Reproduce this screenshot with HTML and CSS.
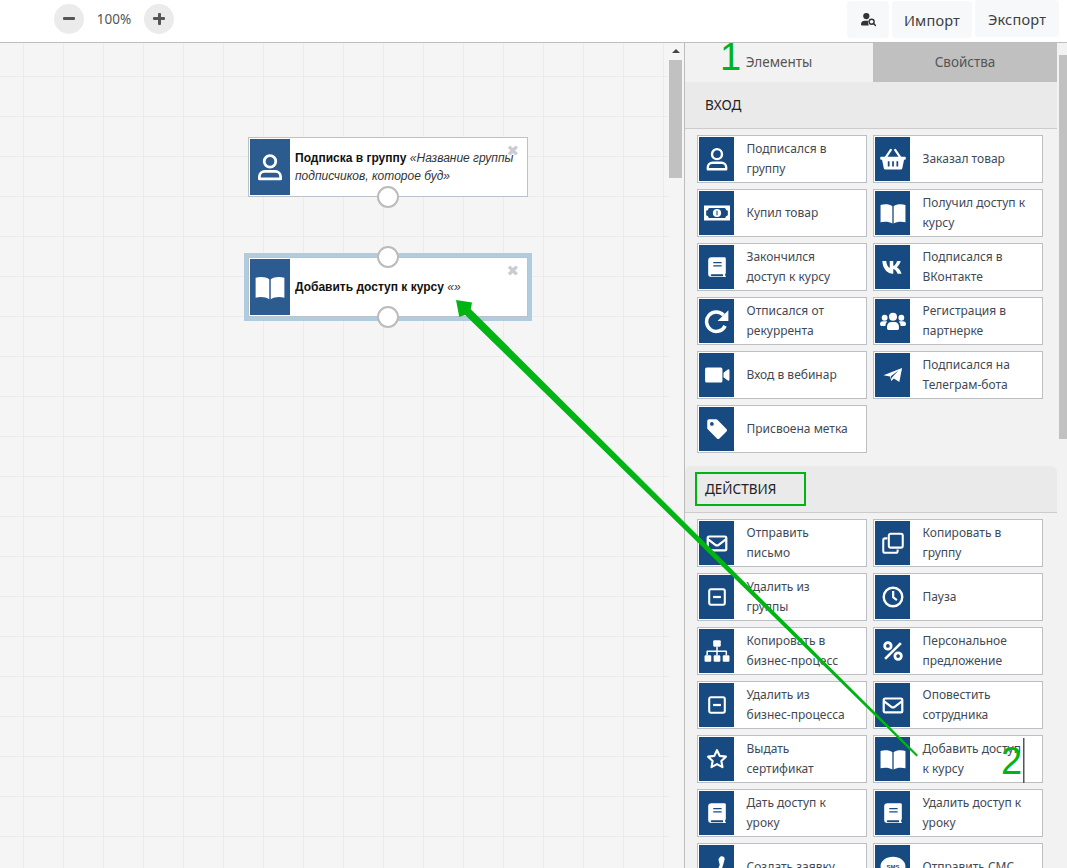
FILE: index.html
```html
<!DOCTYPE html>
<html lang="ru">
<head>
<meta charset="utf-8">
<title>Редактор процесса</title>
<link rel="stylesheet" href="styles.css">
</head>
<body>
<svg class="defs" width="0" height="0" aria-hidden="true">
  <symbol id="i-user" viewBox="0 0 24 24"><circle cx="12" cy="7.500" r="4.600" fill="none" stroke="#fff" stroke-width="2.200"/><path d="M3.500 21.500v-1.700a4.300 4.300 0 0 1 4.300-4.300h8.400a4.300 4.300 0 0 1 4.300 4.300v1.700z" fill="none" stroke="#fff" stroke-width="2.200" stroke-linejoin="round"/></symbol>
  <symbol id="i-basket" viewBox="0 0 24 24"><path fill="#fff" fill-rule="evenodd" d="M1 10h22a.8.8 0 0 1 .8.8v1a.8.8 0 0 1-.8.8h-.8l-1.600 8a1.500 1.500 0 0 1-1.500 1.200H5a1.500 1.500 0 0 1-1.500-1.200l-1.600-8H1a.8.8 0 0 1-.8-.8v-1A.8.8 0 0 1 1 10zM7.200 14v5h1.600v-5zM11.200 14v5h1.600v-5zM15.200 14v5h1.600v-5z"/><path d="M5 11l5-7.500M19 11l-5-7.500" stroke="#fff" stroke-width="2" stroke-linecap="round"/></symbol>
  <symbol id="i-money" viewBox="0 0 24 24"><path fill="#fff" fill-rule="evenodd" d="M0 5h24v14H0zM4.500 7.300Q4 9.500 2 10v4q2 .5 2.500 2.700h15Q20 14.500 22 14v-4q-2-.5-2.500-2.700z"/><circle cx="12" cy="12" r="3.800" fill="#fff"/><path d="M11.500 10h1v4h-1z" fill="#164a80"/></symbol>
  <symbol id="i-bookopen" viewBox="0 0 24 24"><path fill="#fff" d="M.5 4.500C4.500 3.500 8.800 3.800 11.400 5.700v16C8.800 20 4.500 19.600.5 20.500zM23.500 4.500C19.500 3.500 15.200 3.800 12.600 5.700v16c2.600-1.700 6.900-2.100 10.900-1.200z"/></symbol>
  <symbol id="i-book" viewBox="-2 -2 28 28"><path fill="#fff" fill-rule="evenodd" d="M6 1.500h14a1.500 1.500 0 0 1 1.500 1.500v15.500a1.200 1.200 0 0 1-.7 1v2a1 1 0 0 1 .7 1v.3H6a3.500 3.500 0 0 1-3.500-3.500V5A3.500 3.500 0 0 1 6 1.500zM8 6.500v1.500h9V6.500zM8 10v1.500h9V10zM6 19.800a1.200 1.200 0 0 0 0 2.200h12.500v-2.200z"/></symbol>
  <symbol id="i-vk" viewBox="-2 -2 28 28"><path fill="#fff" d="M.5 5.500h4.200c.4 4.300 2.200 7 3.800 7.400V5.500h3.800v5.300c1.600-.3 3.300-2.600 4.100-5.300h3.900c-.7 3.200-2.700 5.600-4.200 6.700 1.500.8 3.900 2.700 5.100 7h-4.300c-.9-2.700-2.900-4.800-4.600-5v5h-.6C6.900 19.200 1 14.900.5 5.500z"/></symbol>
  <symbol id="i-redo" viewBox="0 0 24 24"><path d="M19.500 16.500A9 9 0 1 1 18 6.500" fill="none" stroke="#fff" stroke-width="3.200"/><path d="M22.500 2v10h-10z" fill="#fff"/></symbol>
  <symbol id="i-users" viewBox="0 0 24 24"><g fill="#fff"><circle cx="12" cy="8" r="3.700"/><circle cx="4.300" cy="9" r="2.700"/><circle cx="19.700" cy="9" r="2.700"/><path d="M6.500 19v-2a4 4 0 0 1 4-4h3a4 4 0 0 1 4 4v2a1.200 1.200 0 0 1-1.200 1.200H7.700A1.200 1.200 0 0 1 6.500 19z"/><path d="M0 15a2.800 2.800 0 0 1 2.800-2.800h2.600c.4 0 .8.100 1.100.4A5 5 0 0 0 5 16.500H1.500A1.500 1.500 0 0 1 0 15zM24 15a2.800 2.800 0 0 0-2.800-2.800h-2.600c-.4 0-.8.100-1.100.4a5 5 0 0 1 1.500 3.900h3.500A1.500 1.500 0 0 0 24 15z"/></g></symbol>
  <symbol id="i-video" viewBox="0 0 24 24"><path fill="#fff" d="M2.500 5h13A1.500 1.500 0 0 1 17 6.500v11a1.500 1.500 0 0 1-1.500 1.500h-13A1.500 1.500 0 0 1 1 17.500v-11A1.500 1.500 0 0 1 2.500 5zM18 10l4-3a1 1 0 0 1 1.500.8v8.400a1 1 0 0 1-1.500.8l-4-3z"/></symbol>
  <symbol id="i-plane" viewBox="-3 -3 30 30"><path fill="#fff" d="M1 12.300L22.500 4 19.300 20 13 16l-3 2.800-1.300-5zM9.500 13.500l.8 3 1-2.200 7-7.500z"/></symbol>
  <symbol id="i-tag" viewBox="-2 -2 28 28"><path fill="#fff" fill-rule="evenodd" d="M1.500 3.500A2 2 0 0 1 3.500 1.500H11a2 2 0 0 1 1.400.6l9.800 9.800a2 2 0 0 1 0 2.800l-7.500 7.500a2 2 0 0 1-2.800 0L2.100 12.400A2 2 0 0 1 1.500 11zM6.500 4.500a2 2 0 1 0 0 4 2 2 0 0 0 0-4z"/></symbol>
  <symbol id="i-mail" viewBox="-2 -2 28 28"><rect x="2" y="5" width="20" height="15" rx="1.500" fill="none" stroke="#fff" stroke-width="2.400"/><path d="M2.500 8l7.700 6a3 3 0 0 0 3.600 0l7.700-6" fill="none" stroke="#fff" stroke-width="2.400"/></symbol>
  <symbol id="i-clone" viewBox="-2 -2 28 28"><rect x="7.500" y="2" width="15" height="15" rx="2" fill="none" stroke="#fff" stroke-width="2.200"/><path d="M6 7H3.500A2 2 0 0 0 1.500 9v11.500a2 2 0 0 0 2 2H15a2 2 0 0 0 2-2V19" fill="none" stroke="#fff" stroke-width="2.200"/></symbol>
  <symbol id="i-minus" viewBox="-3 -3 30 30"><rect x="3" y="3" width="18" height="18" rx="2" fill="none" stroke="#fff" stroke-width="2.400"/><rect x="7.500" y="10.700" width="9" height="2.600" fill="#fff"/></symbol>
  <symbol id="i-clock" viewBox="-2 -2 28 28"><circle cx="12" cy="12" r="10" fill="none" stroke="#fff" stroke-width="2.600"/><path d="M11 5.500h2.400v6.200l3.500 2.600-1.400 1.900-4.500-3.300z" fill="#fff"/></symbol>
  <symbol id="i-sitemap" viewBox="0 0 24 24"><g fill="#fff"><rect x="8.500" y="2" width="7" height="6" rx="1"/><rect x=".5" y="16" width="6.200" height="6" rx="1"/><rect x="8.900" y="16" width="6.200" height="6" rx="1"/><rect x="17.300" y="16" width="6.200" height="6" rx="1"/><path d="M11.300 8h1.400v3.500h7.800a.8.8 0 0 1 .8.800V16h-1.400v-3.100h-7.200V16h-1.400v-3.100H3.600V16H2.200v-3.700a.8.800 0 0 1 .8-.8h8.300z"/></g></symbol>
  <symbol id="i-percent" viewBox="-2 -2 28 28"><g fill="none" stroke="#fff" stroke-width="3"><circle cx="6.500" cy="6.500" r="3.500"/><circle cx="17.500" cy="17.500" r="3.500"/></g><path d="M19.500 2.500l2 2L4.500 21.500l-2-2z" fill="#fff"/></symbol>
  <symbol id="i-star" viewBox="-2 -2 28 28"><path d="M12 2.500l2.900 6.100 6.700.9-4.900 4.600 1.200 6.600L12 17.500l-5.900 3.200 1.200-6.600L2.400 9.500l6.700-.9z" fill="none" stroke="#fff" stroke-width="2.300" stroke-linejoin="round"/></symbol>
  <symbol id="i-hand" viewBox="0 0 24 24"><path fill="#fff" d="M15 2.500c2-1 4.500 0 4 2.500l-1.500 5.500c-.8 2.500-1.500 5-3 7.500l-4 2.500 1-5c1.500-1.500 2.500-3.500 3-5.500l-1-4c-.3-1.500.5-2.500 1.500-3.500z"/></symbol>
  <symbol id="i-sms" viewBox="0 0 24 24"><path fill="#fff" d="M12 2.500c6.300 0 11.500 3.900 11.500 8.800S18.300 20 12 20c-1.400 0-2.700-.2-3.900-.6-1.500 1.100-3.500 2.100-6.100 2.100 1.300-1.300 2.200-2.900 2.500-4.100C2 16 .5 13.800.5 11.300.5 6.400 5.700 2.500 12 2.500z"/></symbol>
  <symbol id="i-find" viewBox="0 0 24 24"><circle cx="8.500" cy="6.500" r="5" fill="#333"/><path d="M0 20a6 6 0 0 1 6-6h6a7.500 7.500 0 0 0 .5 7.500H1.500A1.500 1.500 0 0 1 0 20z" fill="#333"/><circle cx="17" cy="15.500" r="4" fill="none" stroke="#333" stroke-width="2.200"/><path d="M20 18.500l3.200 3.200" stroke="#333" stroke-width="2.400" stroke-linecap="round"/></symbol>
</svg>

<div class="app">
  <header class="toolbar">
    <div class="zoom">
      <button class="round" type="button" aria-label="Уменьшить"><span class="bar"></span></button>
      <span class="zoom-value">100%</span>
      <button class="round" type="button" aria-label="Увеличить"><span class="bar"></span><span class="bar bar-v"></span></button>
    </div>
    <div class="actions">
      <button class="tool tool-icon" type="button" aria-label="Поиск"><svg class="find"><use href="#i-find"/></svg></button>
      <button class="tool tool-import" type="button">Импорт</button>
      <button class="tool tool-export" type="button">Экспорт</button>
    </div>
  </header>

  <main class="main">
    <section class="canvas">
      <article class="node node-a">
        <div class="node-icon"><svg class="node-glyph"><use href="#i-user"/></svg></div>
        <p class="node-text"><b>Подписка в группу</b> <i>«Название группы подписчиков, которое буд»</i></p>
        <span class="node-close">✖</span>
        <span class="port port-bottom"></span>
      </article>
      <article class="node node-b">
        <div class="node-icon"><svg class="node-glyph"><use href="#i-bookopen"/></svg></div>
        <p class="node-text"><b>Добавить доступ к курсу</b> <i>«»</i></p>
        <span class="node-close">✖</span>
        <span class="port port-top"></span>
        <span class="port port-bottom"></span>
      </article>
    </section>

    <div class="scroll scroll-left"><span class="scroll-arrow"></span><span class="thumb thumb-left"></span></div>

    <aside class="panel">
      <nav class="tabs">
        <div class="tab tab-active">Элементы</div>
        <div class="tab">Свойства</div>
      </nav>

      <h2 class="section">ВХОД</h2>
      <div class="items">
        <div class="item"><div class="item-icon"><svg><use href="#i-user"/></svg></div><span class="label">Подписался в группу</span></div>
        <div class="item"><div class="item-icon"><svg><use href="#i-basket"/></svg></div><span class="label">Заказал товар</span></div>
        <div class="item"><div class="item-icon"><svg><use href="#i-money"/></svg></div><span class="label">Купил товар</span></div>
        <div class="item"><div class="item-icon"><svg><use href="#i-bookopen"/></svg></div><span class="label">Получил доступ к курсу</span></div>
        <div class="item"><div class="item-icon"><svg><use href="#i-book"/></svg></div><span class="label">Закончился доступ к курсу</span></div>
        <div class="item"><div class="item-icon"><svg><use href="#i-vk"/></svg></div><span class="label">Подписался в ВКонтакте</span></div>
        <div class="item"><div class="item-icon"><svg><use href="#i-redo"/></svg></div><span class="label">Отписался от рекуррента</span></div>
        <div class="item"><div class="item-icon"><svg><use href="#i-users"/></svg></div><span class="label">Регистрация в партнерке</span></div>
        <div class="item"><div class="item-icon"><svg><use href="#i-video"/></svg></div><span class="label">Вход в вебинар</span></div>
        <div class="item"><div class="item-icon"><svg><use href="#i-plane"/></svg></div><span class="label">Подписался на Телеграм-бота</span></div>
        <div class="item"><div class="item-icon"><svg><use href="#i-tag"/></svg></div><span class="label">Присвоена метка</span></div>
      </div>

      <h2 class="section section-round">ДЕЙСТВИЯ</h2>
      <div class="items">
        <div class="item"><div class="item-icon"><svg><use href="#i-mail"/></svg></div><span class="label">Отправить письмо</span></div>
        <div class="item"><div class="item-icon"><svg><use href="#i-clone"/></svg></div><span class="label">Копировать в группу</span></div>
        <div class="item"><div class="item-icon"><svg><use href="#i-minus"/></svg></div><span class="label">Удалить из группы</span></div>
        <div class="item"><div class="item-icon"><svg><use href="#i-clock"/></svg></div><span class="label">Пауза</span></div>
        <div class="item"><div class="item-icon"><svg><use href="#i-sitemap"/></svg></div><span class="label">Копировать в бизнес-процесс</span></div>
        <div class="item"><div class="item-icon"><svg><use href="#i-percent"/></svg></div><span class="label">Персональное предложение</span></div>
        <div class="item"><div class="item-icon"><svg><use href="#i-minus"/></svg></div><span class="label">Удалить из бизнес-процесса</span></div>
        <div class="item"><div class="item-icon"><svg><use href="#i-mail"/></svg></div><span class="label">Оповестить сотрудника</span></div>
        <div class="item"><div class="item-icon"><svg><use href="#i-star"/></svg></div><span class="label">Выдать сертификат</span></div>
        <div class="item"><div class="item-icon"><svg><use href="#i-bookopen"/></svg></div><span class="label">Добавить доступ к курсу</span></div>
        <div class="item"><div class="item-icon"><svg><use href="#i-book"/></svg></div><span class="label">Дать доступ к уроку</span></div>
        <div class="item"><div class="item-icon"><svg><use href="#i-book"/></svg></div><span class="label">Удалить доступ к уроку</span></div>
        <div class="item"><div class="item-icon"><svg><use href="#i-hand"/></svg></div><span class="label">Создать заявку</span></div>
        <div class="item"><div class="item-icon"><svg viewBox="0 0 24 24"><use href="#i-sms" width="24" height="24"/><text class="sms" x="12" y="13.500" text-anchor="middle">SMS</text></svg></div><span class="label">Отправить СМС</span></div>
      </div>
    </aside>

    <div class="scroll scroll-right"><span class="thumb thumb-right"></span></div>
  </main>

  <svg class="overlay" viewBox="0 0 1067 868" aria-hidden="true">
    <polygon class="arrow" points="456,300 472,302.500 470.800,309.300 918,755 916.500,756.500 465.100,314.900 459.300,317"/>
    <rect class="frame" x="696" y="473" width="109" height="32"/>
    <rect class="caret" x="1023" y="738" width="1.500" height="45"/>
  </svg>
  <span class="mark mark-1">1</span>
  <span class="mark mark-2">2</span>
</div>
</body>
</html>
```
FILE: styles.css
```css
* { box-sizing: border-box; }
html, body { margin: 0; padding: 0; height: 100%; overflow: hidden; }
body { background: #fff; font-family: "Noto Sans", "Open Sans", sans-serif; color: #3f4a56; }
.defs { position: absolute; }

.app { position: relative; width: 1067px; height: 868px; display: flex; flex-direction: column; overflow: hidden; }

/* Toolbar */
.toolbar { flex: 0 0 43px; display: flex; justify-content: space-between; align-items: flex-start; background: #fff; border-bottom: 1px solid #bdbdbd; padding-left: 54px; padding-right: 8px; }
.zoom { display: flex; align-items: center; margin-top: 4px; }
.round { position: relative; width: 30px; height: 30px; border: 0; padding: 0; border-radius: 50%; background: #ebebeb; }
.bar { position: absolute; left: 9px; top: 13px; width: 12px; height: 3px; border-radius: 1px; background: #555; }
.bar-v { left: 13.500px; top: 9px; width: 3px; height: 12px; }
.zoom-value { width: 60px; text-align: center; font-size: 13.500px; color: #555; }
.actions { display: flex; align-items: flex-start; gap: 3px; }
.tool { height: 37px; margin-top: 1px; border: 0; border-radius: 4px; background: #f7f8f9; font: 14.500px "Noto Sans", sans-serif; letter-spacing: .2px; color: #3a3f45; padding: 0; }
.tool-icon { width: 42px; display: flex; align-items: center; justify-content: center; }
.tool-import { width: 80px; }
.tool-export { width: 84px; margin-top: 0; }
.find { width: 15px; height: 15px; }

/* Main row */
.main { flex: 1; display: flex; min-height: 0; }
.canvas { position: relative; flex: 0 0 668px; background-color: #f5f5f5; background-image: linear-gradient(to right, #ebebeb 1px, transparent 1px), linear-gradient(to bottom, #ebebeb 1px, transparent 1px); background-size: 40px 40px; background-position: 23px 33px; }

.scroll { position: relative; background: #f5f5f5; }
.scroll-left { flex: 0 0 16px; }
.scroll-right { flex: 0 0 10px; background: #f2f2f2; }
.scroll-arrow { position: absolute; left: 4px; top: 6px; border-left: 4px solid transparent; border-right: 4px solid transparent; border-bottom: 4px solid #444; }
.thumb { display: block; background: #c1c1c1; }
.thumb-left { margin: 17px 2px 0 1px; height: 118px; }
.thumb-right { margin: 12px 0 0 2px; height: 384px; }

/* Nodes */
.node { position: absolute; left: 248px; width: 280px; height: 60px; display: flex; padding: 1px; background: #fff; border: 1px solid #bcc2c9; }
.node-a { top: 94px; }
.node-b { top: 214px; outline: 4px solid #b0cde0; }
.node-icon { flex: 0 0 40px; display: flex; align-items: center; justify-content: center; background: #2c5c8f; }
.node-glyph { width: 30px; height: 30px; }
.node-text { margin: 0 0 0 5px; width: 225px; align-self: center; font: 12px/18px "Liberation Sans", Arial, sans-serif; color: #111; }
.node-text i { color: #333; }
.node-close { position: absolute; right: 8px; top: 4px; font: 15px/18px "DejaVu Sans", sans-serif; color: #c9ccd0; }
.port { position: absolute; left: 128px; width: 22px; height: 22px; border-radius: 50%; background: #fff; border: 2px solid #bbb; }
.port-top { top: -12px; }
.port-bottom { bottom: -12px; }

/* Panel */
.panel { flex: 0 0 373px; border-left: 1px solid #bdbdbd; background: #f2f2f2; overflow: hidden; }
.tabs { display: flex; height: 39px; }
.tab { display: flex; align-items: center; justify-content: center; padding-bottom: 1px; font-size: 13.500px; color: #555; }
.tab:first-child { flex: 0 0 188px; }
.tab:last-child { flex: 1; background: #c0c0c0; }
.tab-active { background: #f2f2f2; }
.section { margin: 0; height: 47px; display: flex; align-items: center; padding: 0 0 1px 20px; font-size: 13.500px; font-weight: 400; color: #222; background: #eaeaea; border-bottom: 1px solid #ccc; }
.section-round { border-radius: 6px 6px 0 0; }
.items { display: grid; grid-template-columns: 170px 170px; grid-auto-rows: 48px; gap: 6px; padding: 6px 12px 0; height: 337px; align-content: start; }
.item { display: flex; align-items: center; background: #fff; border: 1px solid #bcc0c5; padding: 1px; }
.item-icon { flex: 0 0 35px; align-self: stretch; display: flex; align-items: center; justify-content: center; background: #164a80; }
.item-icon svg { width: 26px; height: 26px; }
.label { margin-left: 12.500px; max-width: 105px; font-size: 12px; line-height: 20px; color: #3f4a56; }
.sms { font: 700 5.500px "Liberation Sans", sans-serif; fill: #164a80; }

/* Annotations drawn over the screenshot */
.overlay { position: absolute; left: 0; top: 0; width: 1067px; height: 868px; pointer-events: none; }
.arrow { fill: #00b414; }
.frame { fill: none; stroke: #00b414; stroke-width: 2; }
.caret { fill: #555; }
.mark { position: absolute; font: 38px/38px "Liberation Sans", sans-serif; color: #00b414; }
.mark-1 { left: 720px; top: 38px; }
.mark-2 { left: 1001px; top: 742px; }
```
